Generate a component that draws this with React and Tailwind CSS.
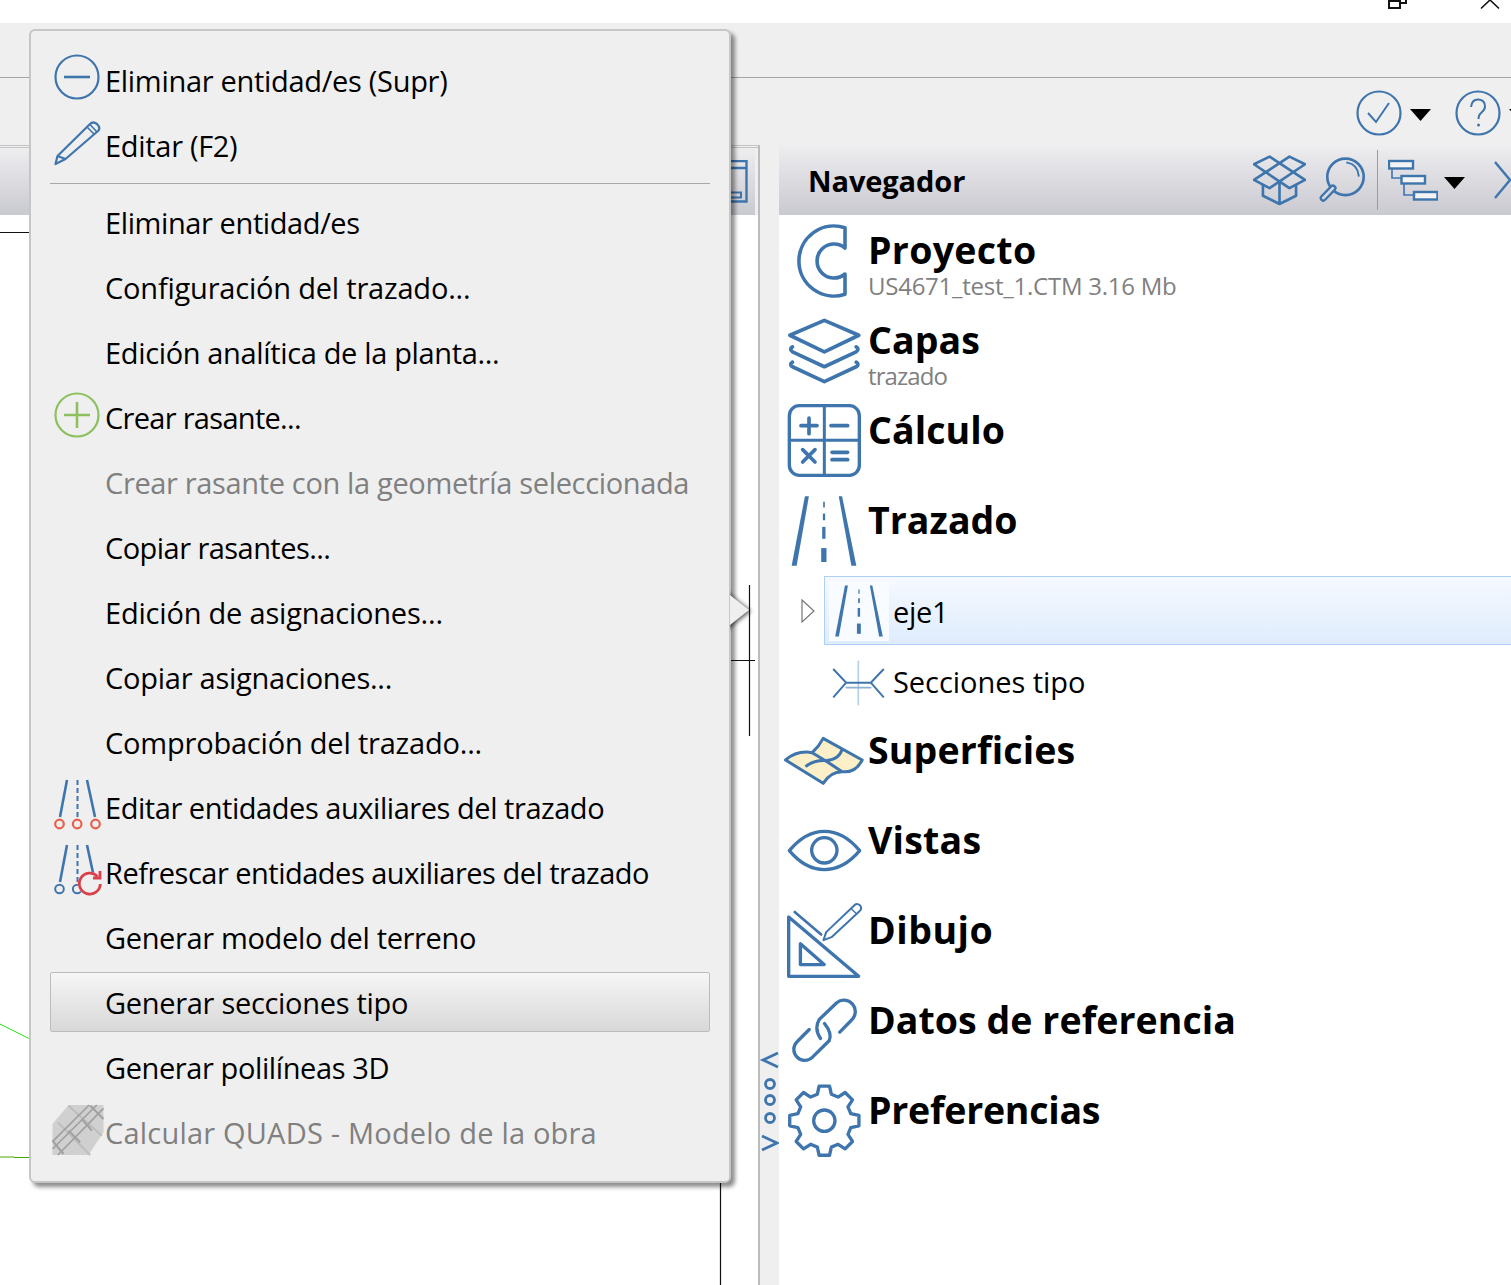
const BLUE = '#3f75ad';

function Triangle({ className = '' }) {
  return (
    <svg viewBox="0 0 21 12" className={`w-[21px] h-[12px] shrink-0 ${className}`}>
      <path d="M0 0H21L10.5 12Z" fill="#000" />
    </svg>
  );
}

function RoadLines({ stroke = BLUE }) {
  return (
    <g fill="none" stroke={stroke} strokeWidth="2.6">
      <path d="M14 0L7 37" />
      <path d="M24.5 0V37" strokeDasharray="5 3" strokeWidth="2" />
      <path d="M34 0L42 37" />
    </g>
  );
}

function Road({ className }) {
  return (
    <svg viewBox="60 585 205 215" className={className}>
      <g fill={BLUE}>
        <path d="M105 588H117L80 797H65Z" />
        <path d="M207 588H217L260 797H245Z" />
        <path d="M160 604H165V622H160Z" />
        <path d="M159 640H166V660H159Z" />
        <path d="M157 680H167V716H157Z" />
        <path d="M154 744H170V786H154Z" />
      </g>
    </svg>
  );
}

const menuIcons = {
  minus: (
    <g fill="none" stroke={BLUE} strokeWidth="2.2">
      <circle cx="24" cy="25" r="21.500" />
      <path d="M11 25H37" strokeWidth="2.6" />
    </g>
  ),
  pencil: (
    <g fill="none" stroke={BLUE} strokeWidth="2.2" strokeLinejoin="round">
      <path d="M2.5 47L4.5 39L37 7Q40 4 44 7Q48 11 45 14L12.5 42Z" />
      <path d="M4.5 39L12.5 42" />
      <path d="M34 10L41 17M37 7.5L43.500 14.500" strokeWidth="1.6" />
    </g>
  ),
  plus: (
    <g fill="none" stroke="#8dc05f" strokeWidth="2.2">
      <circle cx="24" cy="25" r="21.500" />
      <path d="M11 25H37M24 12V38" strokeWidth="2.6" />
    </g>
  ),
  edit: (
    <g>
      <RoadLines />
      <g fill="none" stroke="#e8604c" strokeWidth="2.2">
        <circle cx="6.500" cy="44" r="4.300" />
        <circle cx="24.200" cy="44" r="4.300" />
        <circle cx="42.500" cy="44" r="4.300" />
      </g>
    </g>
  ),
  refresh: (
    <g>
      <RoadLines />
      <g fill="none" stroke={BLUE} strokeWidth="2">
        <circle cx="6.500" cy="44" r="4.300" />
        <circle cx="24.200" cy="44" r="4.300" />
      </g>
      <circle cx="36.800" cy="38.700" r="12" fill="#efefef" />
      <g fill="none" stroke="#d9404a" strokeWidth="2.800">
        <path d="M44.500 31.500A10.500 10.500 0 1 0 47.300 39" />
        <path d="M47 26V33H40" />
      </g>
    </g>
  ),
  quads: (
    <g transform="translate(-4.500 -6) scale(0.3333)">
      <path d="M12 75L60 18H165V100L120 168H12Z" fill="#d0d0d0" />
      <g fill="none" stroke="#bdbdbd" strokeWidth="6">
        <path d="M60 20L160 110M28 70L125 168" />
      </g>
      <g fill="none" stroke="#a0a0a0" strokeWidth="6">
        <path d="M12 128L122 18M28 168L165 28M12 150L145 18" strokeWidth="5" />
        <path d="M12 125L45 165M60 95L95 130M100 60L130 95M125 20L165 60" />
      </g>
    </g>
  ),
};

const menuGroups = [
  [
    { label: 'Eliminar entidad/es (Supr)', icon: 'minus', tw: 'mt-[2px] tracking-[-0.3px]' },
    { label: 'Editar (F2)', icon: 'pencil', tw: 'mt-[2px] tracking-[-0.3px]' },
  ],
  [
    { label: 'Eliminar entidad/es', tw: 'tracking-[-0.4px]' },
    { label: 'Configuración del trazado...', tw: 'tracking-[-0.2px]' },
    { label: 'Edición analítica de la planta...', tw: 'tracking-[-0.35px]' },
    { label: 'Crear rasante...', icon: 'plus', tw: 'tracking-[-0.7px]' },
    { label: 'Crear rasante con la geometría seleccionada', disabled: true, tw: 'tracking-[-0.35px]' },
    { label: 'Copiar rasantes...', tw: 'tracking-[-0.55px]' },
    { label: 'Edición de asignaciones...', tw: 'tracking-[-0.2px]' },
    { label: 'Copiar asignaciones...', tw: 'tracking-[-0.25px]' },
    { label: 'Comprobación del trazado...', tw: 'tracking-[-0.2px]' },
    { label: 'Editar entidades auxiliares del trazado', icon: 'edit', tw: 'tracking-[-0.45px]' },
    { label: 'Refrescar entidades auxiliares del trazado', icon: 'refresh', tw: 'tracking-[-0.5px]' },
    { label: 'Generar modelo del terreno', tw: 'tracking-[-0.35px]' },
    { label: 'Generar secciones tipo', active: true },
    { label: 'Generar polilíneas 3D', tw: 'tracking-[-0.4px]' },
    { label: 'Calcular QUADS - Modelo de la obra', icon: 'quads', disabled: true, tw: 'tracking-[0.2px]' },
  ],
];

function MenuRow({ label, icon, disabled, active, tw = 'tracking-[-0.3px]' }) {
  return (
    <div className="h-[65px] pb-[3px] pt-[2px]">
      <div
        className={`flex h-full items-center rounded-[2px] border ${
          active ? 'border-[#bcbcbc] bg-gradient-to-b from-[#f6f6f6] to-[#d8d8d8]' : 'border-transparent'
        }`}
      >
        <div className="flex w-[54px] shrink-0 justify-center">
          {icon && (
            <svg viewBox="0 0 50 50" className="mb-[5px] h-[50px] w-[50px] shrink-0 overflow-visible">
              {menuIcons[icon]}
            </svg>
          )}
        </div>
        <span className={`pt-[1px] text-[29px] leading-none ${tw} ${disabled ? 'text-[#808080]' : 'text-black'}`}>{label}</span>
      </div>
    </div>
  );
}

function ContextMenu() {
  return (
    <div className="absolute left-[29px] top-[29px] h-[1154px] w-[702px] rounded-[6px] border-2 border-[#c6c6c6] bg-[#efefef] pl-[19px] pr-[19px] pt-[16px] shadow-[4px_4px_4px_rgba(0,0,0,0.45)]">
      {menuGroups[0].map((item) => (
        <MenuRow key={item.label} {...item} />
      ))}
      <div className="flex h-[13px] items-center">
        <div className="h-px w-full bg-[#a8a8a8]" />
      </div>
      {menuGroups[1].map((item) => (
        <MenuRow key={item.label} {...item} />
      ))}
      {/* submenu pointer, clipped so its shadow stays off the menu */}
      <div className="absolute left-[699px] top-[553px] h-[52px] w-[30px] overflow-hidden">
        <svg viewBox="0 0 30 52" className="h-[52px] w-[30px] overflow-visible drop-shadow-[2px_1px_2px_rgba(0,0,0,0.65)]">
          <path d="M-5 7L19 26L-5 45Z" fill="#efefef" />
        </svg>
      </div>
    </div>
  );
}

function LayersIcon({ className }) {
  return (
    <svg viewBox="50 50 225 205" className={className}>
      <g fill="none" stroke={BLUE} strokeWidth="11" strokeLinejoin="round" strokeLinecap="round">
        <path d="M162 60L266 105L162 155L58 105Z" />
        <path d="M66 140Q55 147 66 155L162 200L258 155Q269 147 258 140" />
        <path d="M66 186Q55 193 66 200L162 245L258 200Q269 193 258 186" />
      </g>
    </svg>
  );
}

function CalcIcon({ className }) {
  return (
    <svg viewBox="50 310 225 225" className={className}>
      <g fill="none" stroke={BLUE} strokeLinecap="round">
        <rect x="57" y="318" width="210" height="209" rx="30" strokeWidth="10" />
        <path d="M162 318V527M57 422H267" strokeWidth="9" />
        <path d="M92 378H140M116 355V402M182 378H232M97 450L134 487M134 450L97 487M185 458H232M185 480H232" strokeWidth="11" />
      </g>
    </svg>
  );
}

function ProjectIcon({ className }) {
  return (
    <svg viewBox="794 221 56 79" className={className}>
      <path
        d="M845 227.800A35 35 0 1 0 845 294.200V274A17 17 0 1 1 845 248Z"
        fill="none"
        stroke={BLUE}
        strokeWidth="3.600"
        strokeLinejoin="round"
      />
    </svg>
  );
}

function SectionsIcon({ className }) {
  return (
    <svg viewBox="185 1072 165 140" className={className}>
      <g fill="none" strokeLinecap="round">
        <path d="M267 1076V1208" stroke="#b9cde3" strokeWidth="5" />
        <path d="M230 1156H305" stroke="#8fb0d2" strokeWidth="5" />
        <path d="M192 1101L230 1141H305L343 1101M192 1184L230 1141M305 1141L343 1184" stroke={BLUE} strokeWidth="6" />
      </g>
    </svg>
  );
}

function SurfaceIcon({ className }) {
  return (
    <svg viewBox="8 18 245 150" className={className}>
      <path
        d="M15 90Q50 60 95 68Q115 50 128 25L245 90Q225 130 185 125Q150 125 128 160Z"
        fill="#fdf0c8"
        stroke={BLUE}
        strokeWidth="9"
        strokeLinejoin="round"
      />
      <path d="M95 68L135 92L185 125M75 110Q100 90 135 92Q175 90 185 58" fill="none" stroke={BLUE} strokeWidth="9" />
    </svg>
  );
}

function EyeIcon({ className }) {
  return (
    <svg viewBox="110 325 225 135" className={className}>
      <g fill="none" stroke={BLUE} strokeWidth="10" strokeLinejoin="round">
        <path d="M117 393Q165 335 222 335Q280 335 328 393Q280 450 222 450Q165 450 117 393Z" />
        <circle cx="222" cy="392" r="38" />
      </g>
    </svg>
  );
}

function DrawIcon({ className }) {
  return (
    <svg viewBox="110 545 230 230" className={className}>
      <g fill="none" stroke={BLUE} strokeLinejoin="round" strokeLinecap="round">
        <path d="M118 590V767H327Z" strokeWidth="10" />
        <path d="M153 670V732H224Z" strokeWidth="10" />
        <path d="M136 575L215 642" strokeWidth="8" />
        <path d="M222 659L230 635L316 553Q323 548 331 555Q338 563 331 571L246 650Z" strokeWidth="6" />
        <path d="M305 565L321 581" strokeWidth="4" />
      </g>
    </svg>
  );
}

function LinkIcon({ className }) {
  return (
    <svg viewBox="120 830 205 205" className={className}>
      <g fill="none" stroke={BLUE} strokeWidth="10" strokeLinecap="round">
        <path d="M178 928L142 964A32 32 0 0 0 187 1012L238 962Q248 940 224 910" />
        <path d="M270 936L305 900A32 32 0 0 0 260 848L208 898Q192 925 212 955" />
      </g>
    </svg>
  );
}

function gearPath(cx, cy, teeth, outer, root) {
  const step = (Math.PI * 2) / teeth;
  const pts = [];
  for (let i = 0; i < teeth; i++) {
    const a = -Math.PI / 2 + i * step;
    const at = (r, d) => `${(cx + r * Math.cos(a + d)).toFixed(1)} ${(cy + r * Math.sin(a + d)).toFixed(1)}`;
    pts.push(at(root, -step * 0.33), at(outer, -step * 0.19), at(outer, step * 0.19), at(root, step * 0.33));
  }
  return `M${pts.join('L')}Z`;
}

function GearIcon({ className }) {
  return (
    <svg viewBox="110 1090 225 225" className={className}>
      <g fill="none" stroke={BLUE} strokeWidth="10" strokeLinejoin="round">
        <path d={gearPath(222, 1203, 8, 105, 82)} />
        <circle cx="222" cy="1203" r="32" />
      </g>
    </svg>
  );
}

function NavItem({ icon, title, sub, subTw = 'tracking-[-0.25px]', tw = 'tracking-[0.05px]', className = 'h-[90px]' }) {
  return (
    <div className={`flex ${className}`}>
      <div className="flex w-[90px] shrink-0 justify-center">{icon}</div>
      <div className="-ml-[1px]">
        <div className={`text-[37.5px] font-bold leading-[50px] text-black ${tw}`}>{title}</div>
        {sub && <div className={`-mt-[1px] text-[24px] leading-[24px] text-[#808080] ${subTw}`}>{sub}</div>}
      </div>
    </div>
  );
}

function Navigator() {
  return (
    <div className="flex min-w-0 flex-1 flex-col overflow-hidden bg-white">
      <div className="flex h-[70px] shrink-0 items-center overflow-hidden bg-gradient-to-b from-[#eeeef0] to-[#c9c9d0] pl-[29px]">
        <span className="mt-[2px] text-[29px] font-bold tracking-[-0.1px] text-black">Navegador</span>
        <div className="ml-auto flex items-center">
          <svg viewBox="25 20 160 155" className="h-[52px] w-[53px] shrink-0">
            <g fill="none" stroke={BLUE} strokeWidth="8" strokeLinejoin="round">
              <path d="M75 27L182 97L135 122L28 50L75 27Z" />
              <path d="M135 27L28 97L75 122L182 50L135 27Z" />
              <path d="M55 112V145L105 170L155 145V112M105 100V170" />
            </g>
          </svg>
          <svg viewBox="220 25 145 145" className="ml-[13px] h-[48px] w-[48px] shrink-0">
            <g fill="none" stroke={BLUE} strokeLinecap="round">
              <circle cx="300" cy="88" r="55" strokeWidth="8" />
              <path d="M305 45Q337 50 340 85" strokeWidth="6" />
              <path d="M262 122L233 152" strokeWidth="22" />
              <path d="M262 122L233 152" strokeWidth="8" stroke="#d8d8de" />
            </g>
          </svg>
          <div className="ml-[10px] h-[60px] w-px bg-[#9a9aa2]" />
          <svg viewBox="1388 158 50 44" className="ml-[10px] h-[44px] w-[50px] shrink-0">
            <g stroke={BLUE} strokeWidth="2.400">
              <path d="M1392 169V178H1401M1404 184V195H1414" fill="none" strokeWidth="1.600" />
              <rect x="1389" y="161" width="24" height="7.500" fill="#f4f4f6" />
              <rect x="1401.500" y="176" width="23.500" height="7.500" fill="#f4f4f6" />
              <rect x="1414" y="192" width="23.500" height="7.500" fill="#f4f4f6" />
            </g>
          </svg>
          <Triangle className="ml-[6px] mt-[5px]" />
          <svg viewBox="0 0 16 38" className="ml-[30px] h-[38px] w-[16px] shrink-0 overflow-visible">
            <path d="M0 1L15 19L0 37" fill="none" stroke={BLUE} strokeWidth="2.400" />
          </svg>
        </div>
      </div>

      <div className="pt-[10px]">
        <NavItem icon={<ProjectIcon className="-mt-[4px] mr-[4px] h-[79px] w-[56px] shrink-0" />} title="Proyecto" tw="tracking-[0.3px]" sub="US4671_test_1.CTM 3.16 Mb" />
        <NavItem icon={<LayersIcon className="mt-[2px] h-[68px] w-[75px] shrink-0" />} title="Capas" sub="trazado" subTw="tracking-[-0.9px]" />
        <NavItem icon={<CalcIcon className="-mt-[2px] h-[75px] w-[75px] shrink-0" />} title="Cálculo" />
        <NavItem icon={<Road className="h-[72px] w-[68px] shrink-0" />} title="Trazado" className="h-[81px]" />

        <div className="flex h-[69px] items-center pl-[22px]">
          <svg viewBox="0 0 14 24" className="h-[24px] w-[14px] shrink-0">
            <path d="M1 1L13 12L1 23Z" fill="#fff" stroke="#777" strokeWidth="1.200" />
          </svg>
          <div className="ml-[9px] flex h-full flex-1 items-center border border-r-0 border-[#aed0f8] bg-gradient-to-b from-[#f6f9ff] to-[#dfecfd] pl-[4px]">
            <div className="flex h-[60px] w-[60px] shrink-0 items-center justify-center bg-[#f8fbff]">
              <Road className="h-[54px] w-[50px]" />
            </div>
            <span className="ml-[4px] mt-[2px] text-[29px] tracking-[-0.3px] text-black">eje1</span>
          </div>
        </div>
        <div className="flex h-[80px] items-start pl-[52px] pt-[15px]">
          <SectionsIcon className="h-[46px] w-[55px] shrink-0" />
          <span className="ml-[7px] text-[29px] leading-[44px] tracking-[-0.05px] text-black">Secciones tipo</span>
        </div>

        <NavItem icon={<SurfaceIcon className="mt-[11px] h-[50px] w-[82px] shrink-0" />} title="Superficies" tw="tracking-[0.15px]" />
        <NavItem icon={<EyeIcon className="mt-[13px] h-[45px] w-[75px] shrink-0" />} title="Vistas" tw="tracking-[0.2px]" />
        <NavItem icon={<DrawIcon className="-mt-[3px] h-[77px] w-[77px] shrink-0" />} title="Dibujo" tw="tracking-[0.5px]" />
        <NavItem icon={<LinkIcon className="mt-[2px] h-[68px] w-[68px] shrink-0" />} title="Datos de referencia" />
        <NavItem icon={<GearIcon className="-mt-[2px] h-[75px] w-[75px] shrink-0" />} title="Preferencias" tw="tracking-[-0.25px]" />
      </div>
    </div>
  );
}

function Splitter() {
  return (
    <div className="flex w-[19px] shrink-0 flex-col items-center justify-end pb-[132px]">
      <svg viewBox="0 0 18 100" className="h-[100px] w-[18px] overflow-visible">
        <g fill="none" stroke={BLUE} strokeWidth="2.800">
          <path d="M17 0L2 7L17 14" />
          <circle cx="9" cy="31" r="4.500" />
          <circle cx="9" cy="47" r="4.500" />
          <circle cx="9" cy="65" r="4.500" />
          <path d="M1 83L16 90L1 97" />
        </g>
      </svg>
    </div>
  );
}

function EditorPanel() {
  return (
    <div className="relative w-[760px] shrink-0 border-r-2 border-[#bcbcbc]">
      <div className="h-[1px] bg-[#c4c4c4]" />
      <div className="h-[1px] bg-[#efefef]" />
      <div className="h-[1px] bg-[#c4c4c4]" />
      <div className="mr-[3px] flex h-[67px] justify-end bg-gradient-to-b from-[#eeeef0] to-[#c9c9d0] pr-[7px]">
        <svg viewBox="731 160 17 43" className="mt-[12px] h-[43px] w-[17px]">
          <g fill="none" stroke={BLUE} strokeWidth="2.400">
            <path d="M731 161H746.500V201.500H731M731 168H746.500" />
            <path d="M731 192.500H741V197.500H731" strokeWidth="2" />
          </g>
        </svg>
      </div>
      <div className="h-[1070px] bg-white" />
      {/* cad drawing behind the menu */}
      <svg viewBox="0 145 758 1140" className="absolute inset-0 h-[1140px] w-[758px]">
        <path d="M0 232.500H40M720.500 1170V1285M749.500 585V736M730 660.500H755" fill="none" stroke="#111" strokeWidth="1.200" />
        <path d="M0 1024L40 1044" fill="none" stroke="#22e010" strokeWidth="1" />
        <path d="M0 1157H14M14 1157.500H40" fill="none" stroke="#4aa800" strokeWidth="1.200" />
      </svg>
    </div>
  );
}

export default function App() {
  return (
    <div className="relative flex h-[1285px] w-[1511px] flex-col overflow-hidden bg-[#efefef] font-['Open_Sans','Noto_Sans',sans-serif]">
      <div className="flex h-[23px] shrink-0 justify-end bg-white">
        <svg viewBox="1380 0 131 23" className="h-[23px] w-[131px]">
          <g fill="none" stroke="#111" strokeWidth="2">
            <path d="M1389 1H1400V8H1389ZM1400 3H1406V0" />
            <path d="M1481 8.500L1490 0L1499 8.500" strokeWidth="1.600" />
          </g>
        </svg>
      </div>
      <div className="h-[55px] shrink-0 border-b border-[#a4a4a4]" />
      <div className="flex h-[67px] shrink-0 items-center justify-end overflow-hidden">
        <svg viewBox="0 0 46 46" className="mt-[3px] h-[46px] w-[46px] shrink-0">
          <g fill="none" stroke={BLUE} strokeWidth="2.200">
            <circle cx="23" cy="23" r="21.500" />
            <path d="M12 23L20 32L33 13" strokeWidth="2" />
          </g>
        </svg>
        <Triangle className="ml-[8px] mt-[7px]" />
        <svg viewBox="0 0 46 46" className="ml-[24px] mt-[3px] h-[46px] w-[46px] shrink-0">
          <circle cx="23" cy="23" r="21.500" fill="none" stroke={BLUE} strokeWidth="2.200" />
          <path d="M16 17Q17 9 23.500 9.500Q30 10 30 16.500Q30 20 26 23Q23.500 25 23.500 29" fill="none" stroke={BLUE} strokeWidth="2" />
          <circle cx="23.500" cy="35" r="1.500" fill={BLUE} />
        </svg>
        <div className="ml-[8px] w-[2px] shrink-0 overflow-hidden">
          <Triangle className="mt-[7px]" />
        </div>
      </div>
      <div className="flex min-h-0 flex-1">
        <EditorPanel />
        <Splitter />
        <Navigator />
      </div>
      <ContextMenu />
    </div>
  );
}
